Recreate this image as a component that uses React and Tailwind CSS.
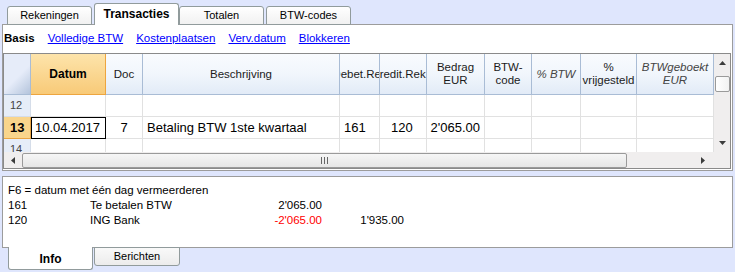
import React from "react";

const COLS =
  "grid grid-cols-[27px_75px_37px_197px_40px_47px_58px_47px_49px_56px_77px]";

const headers = [
  { lines: ["Datum"], active: true },
  { lines: ["Doc"] },
  { lines: ["Beschrijving"] },
  { lines: ["Debet.Rek"] },
  { lines: ["Credit.Rek"], cls: "pr-[9px]" },
  { lines: ["Bedrag", "EUR"] },
  { lines: ["BTW-", "code"] },
  { lines: ["% BTW"], italic: true },
  { lines: ["%", "vrijgesteld"] },
  { lines: ["BTWgeboekt", "EUR"], italic: true },
];

const TopTab = ({ label, active, className = "" }) => {
  if (active) {
    return (
      <div
        className={`relative z-10 h-[22px] w-[85px] bg-white border border-b-0 border-[#919b9c] rounded-t-[3px] flex items-center justify-center text-[12px] font-bold text-black pb-[1px] ${className}`}
      >
        {label}
      </div>
    );
  }
  return (
    <div
      className={`h-[19px] w-[85px] bg-[linear-gradient(#ffffff,#f1f1f1)] border border-[#919b9c] rounded-t-[3px] flex items-center justify-center text-[11px] text-black pb-[1px] ${className}`}
    >
      {label}
    </div>
  );
};

const Arrow = ({ dir }) => {
  const pts = {
    up: "0,4 3.5,0 7,4",
    down: "0,0 3.5,4 7,0",
    left: "4,0 0,3.5 4,7",
    right: "0,0 4,3.5 0,7",
  }[dir];
  const w = dir === "up" || dir === "down" ? 7 : 4;
  const h = dir === "up" || dir === "down" ? 4 : 7;
  return (
    <svg width={w} height={h} viewBox={`0 0 ${w} ${h}`}>
      <polygon points={pts} fill="#3c3c3c" />
    </svg>
  );
};

const BodyRow = ({ num, cells = [], active }) => (
  <div className={`${COLS} h-[22px]`}>
    <div
      className={`flex items-center pl-[6px] border-r border-b ${
        active
          ? "bg-[#f9d58c] border-[#eaa544] font-bold text-[13px] text-black"
          : "bg-[#e6edf8] border-[#d5dde9] text-[11px] text-[#444]"
      }`}
    >
      {num}
    </div>
    {Array.from({ length: 10 }).map((_, i) => {
      const c = cells[i] || {};
      return (
        <div
          key={i}
          className={`flex items-center overflow-hidden whitespace-nowrap text-[13px] text-black ${
            c.sel ? "border border-black" : "border-r border-b border-[#e1e1e1]"
          } ${c.cls || ""}`}
        >
          {c.text}
        </div>
      );
    })}
  </div>
);

export default function App() {
  return (
    <div className="w-[735px] h-[272px] overflow-hidden bg-[#dfe6fd] font-['Liberation_Sans',Arial,sans-serif] text-black">
      {/* top tabs */}
      <div className="flex items-end h-[25px]">
        <TopTab label="Rekeningen" className="ml-[7px]" />
        <TopTab label="Transacties" active className="ml-[2px]" />
        <TopTab label="Totalen" className="ml-0" />
        <TopTab label="BTW-codes" className="ml-[2px]" />
      </div>

      {/* main panel */}
      <div className="-mt-px ml-[2px] w-[731px] h-[147px] bg-white border border-[#9c9c9c]">
        <div className="h-[28px] flex items-center pl-[1px] pb-[1px] text-[11.5px]">
          <span className="font-bold mr-[13px]">Basis</span>
          <a className="text-[#0000ff] underline mr-[13px]">Volledige BTW</a>
          <a className="text-[#0000ff] underline mr-[13px]">Kostenplaatsen</a>
          <a className="text-[#0000ff] underline mr-[13px]">Verv.datum</a>
          <a className="text-[#0000ff] underline">Blokkeren</a>
        </div>

        {/* grid frame */}
        <div className="w-[728px] h-[116px] border border-[#8a8a8a] flex flex-col">
          <div className="flex h-[98px]">
            <div className="w-[710px] flex flex-col">
              <div className={`${COLS} h-[41px]`}>
                <div className="bg-[linear-gradient(135deg,#e6ecf9_55%,#b4c4dc)] border-r border-b border-[#a9bcd5]" />
                {headers.map((h, i) => (
                  <div
                    key={i}
                    className={`flex flex-col items-center justify-center overflow-hidden whitespace-nowrap leading-[13px] text-[11.5px] border-r border-b ${
                      h.active
                        ? "bg-[linear-gradient(#fde4ab,#f8ca78)] border-[#eda53f] font-bold text-[12px]"
                        : "bg-[linear-gradient(#f9fbfe,#f1f6fc_50%,#e2ebf7)] border-[#a9bcd5] text-[#1b1b1b]"
                    } ${h.italic ? "italic text-[#444]" : ""} ${h.cls || ""}`}
                  >
                    {h.lines.map((l) => (
                      <span key={l}>{l}</span>
                    ))}
                  </div>
                ))}
              </div>
              <BodyRow num="12" />
              <BodyRow
                num="13"
                active
                cells={[
                  { text: "10.04.2017", sel: true, cls: "pl-[3px]" },
                  { text: "7", cls: "justify-center" },
                  { text: "Betaling BTW 1ste kwartaal", cls: "pl-[4px]" },
                  { text: "161", cls: "pl-[4px]" },
                  { text: "120", cls: "pl-[11px]" },
                  { text: "2'065.00", cls: "justify-end pr-[4px]" },
                ]}
              />
              <div className="h-[13px] overflow-hidden">
                <BodyRow num="14" />
              </div>
            </div>

            {/* vertical scrollbar */}
            <div className="w-[16px] bg-[#f0eeee] flex flex-col items-center">
              <div className="h-[16px] flex items-center justify-center mt-[1px]">
                <Arrow dir="up" />
              </div>
              <div className="mt-[5px] w-[15px] h-[16px] bg-[linear-gradient(90deg,#ffffff,#f2f2f2)] border border-[#9a9a9a] rounded-[2px]" />
              <div className="flex-1" />
              <div className="h-[14px] flex items-center justify-center mb-[2px]">
                <Arrow dir="down" />
              </div>
            </div>
          </div>

          {/* horizontal scrollbar */}
          <div className="flex h-[16px]">
            <div className="w-[710px] bg-[#f0eeee] flex items-center">
              <div className="w-[18px] flex items-center justify-center">
                <Arrow dir="left" />
              </div>
              <div className="w-[605px] h-[15px] bg-[linear-gradient(#f6f6f6,#e6e6e6)] border border-[#9a9a9a] rounded-[2px] flex items-center justify-center gap-[2px]">
                <span className="w-px h-[7px] bg-[#666]" />
                <span className="w-px h-[7px] bg-[#666]" />
                <span className="w-px h-[7px] bg-[#666]" />
              </div>
              <div className="flex-1" />
              <div className="w-[18px] flex items-center justify-center mr-[2px]">
                <Arrow dir="right" />
              </div>
            </div>
            <div className="w-[16px] bg-[#f0eeee]" />
          </div>
        </div>
      </div>

      {/* info panel */}
      <div className="mt-[5px] ml-[2px] w-[731px] h-[72px] bg-white border border-[#9c9c9c] pl-[5px] pt-[6px] text-[11.5px] leading-[15px]">
        <div>F6 = datum met één dag vermeerderen</div>
        <div className="flex">
          <span className="w-[82px]">161</span>
          <span className="w-[150px]">Te betalen BTW</span>
          <span className="w-[82px] text-right">2'065.00</span>
        </div>
        <div className="flex">
          <span className="w-[82px]">120</span>
          <span className="w-[150px]">ING Bank</span>
          <span className="w-[82px] text-right text-[#ff0000]">-2'065.00</span>
          <span className="w-[82px] text-right">1'935.00</span>
        </div>
      </div>

      {/* bottom tabs */}
      <div className="flex items-start -mt-px">
        <div className="relative z-10 ml-[8px] w-[85px] h-[23px] bg-white border border-t-0 border-[#919b9c] rounded-b-[3px] flex items-center justify-center text-[12px] font-bold pt-[2px]">
          Info
        </div>
        <div className="ml-[1px] w-[86px] h-[19px] bg-[linear-gradient(#f9f9f9,#ececec)] border border-[#919b9c] rounded-b-[3px] flex items-center justify-center text-[11px]">
          Berichten
        </div>
      </div>
    </div>
  );
}
